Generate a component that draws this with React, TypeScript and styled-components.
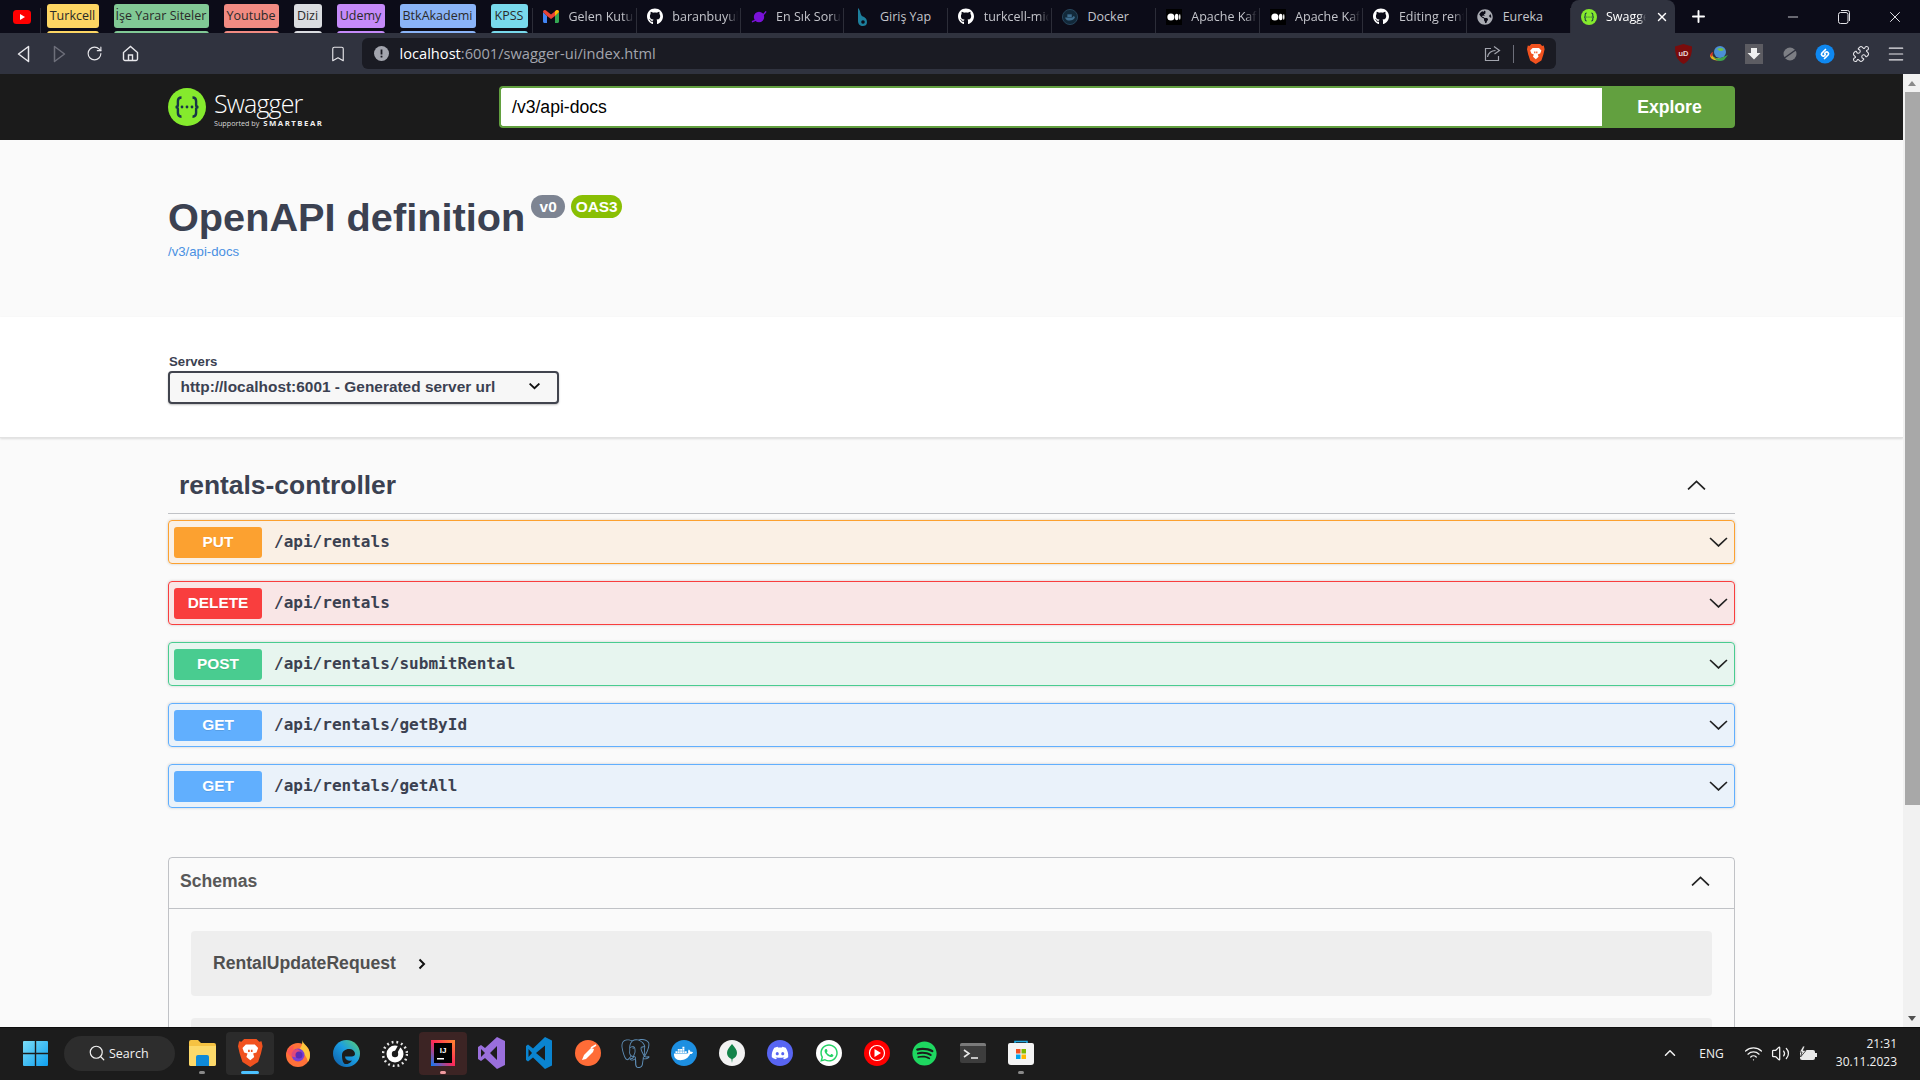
import React from "react";
import styled, { createGlobalStyle } from "styled-components";
import { Search, Wifi, Volume2, ChevronUp, Minus, X, Plus, RotateCw, Bookmark, Puzzle, Menu } from "lucide-react";
import { FaGithub, FaDocker, FaDiscord, FaWhatsapp, FaSpotify, FaGlobeAmericas } from "react-icons/fa";
import { SiPostgresql } from "react-icons/si";

const Global = createGlobalStyle`
  html, body { margin: 0; height: 100%; overflow: hidden; }
  body { font-family: "Liberation Sans", Arial, sans-serif; background: #fafafa; }
  * { box-sizing: border-box; }
`;

const Shell = styled.div`
  display: flex;
  flex-direction: column;
  height: 100vh;
  overflow: hidden;
`;

/* ---------- browser tab strip ---------- */
const TabBar = styled.div`
  display: flex;
  height: 33px;
  flex: none;
  background: #0c0c18;
  overflow: hidden;
  font-family: "Open Sans", sans-serif;
  font-size: 12.5px;
`;
const PinnedTab = styled.div`
  width: 41px;
  height: 33px;
  padding-left: 3px;
  display: flex;
  align-items: center;
  justify-content: center;
  flex: none;
  position: relative;
  &::after {
    content: "";
    position: absolute;
    right: 0;
    top: 8px;
    bottom: 0;
    width: 1px;
    background: #2c2d38;
  }
`;
const ChipRow = styled.div`
  display: flex;
  gap: 15px;
  width: 492px;
  padding: 4px 0 0 5.5px;
  flex: none;
  position: relative;
  &::after {
    content: "";
    position: absolute;
    right: 0;
    top: 8px;
    bottom: 0;
    width: 1px;
    background: #2c2d38;
  }
`;
const Chip = styled.div<{ $bg: string; $w: number }>`
  width: ${(p) => p.$w}px;
  height: 24px;
  flex: none;
  border-radius: 3px;
  background: ${(p) => p.$bg};
  box-shadow: 0 27px 0 ${(p) => p.$bg};
  color: #2a2a2a;
  line-height: 24px;
  text-align: center;
  white-space: nowrap;
  overflow: hidden;
`;
const NamedTab = styled.div`
  width: 103.8px;
  height: 33px;
  flex: none;
  display: flex;
  align-items: center;
  gap: 9.5px;
  padding: 0 3px 0 10px;
  color: #c4c5cb;
  position: relative;
  &::after {
    content: "";
    position: absolute;
    right: 0;
    top: 8px;
    bottom: 0;
    width: 1px;
    background: #2c2d38;
  }
`;
const TabFavicon = styled.span`
  width: 16px;
  height: 16px;
  flex: none;
  display: flex;
  align-items: center;
  justify-content: center;
`;
const TabTitle = styled.span`
  white-space: nowrap;
  overflow: hidden;
  flex: 1;
  -webkit-mask-image: linear-gradient(90deg, #000 82%, transparent 100%);
  mask-image: linear-gradient(90deg, #000 82%, transparent 100%);
`;
const PlainTitle = styled.span`
  white-space: nowrap;
`;
const ActiveTab = styled.div`
  width: 104px;
  height: 33px;
  flex: none;
  display: flex;
  align-items: center;
  gap: 9px;
  padding: 0 6px 0 10px;
  background: #30333f;
  border-radius: 8px 8px 0 0;
  color: #fff;
`;
const NewTab = styled.div`
  width: 48px;
  display: flex;
  align-items: center;
  justify-content: center;
  flex: none;
  color: #fff;
`;
const WindowControls = styled.div`
  margin-left: auto;
  display: flex;
  color: #e4e4e8;
`;
const WindowButton = styled.div`
  width: 51px;
  height: 33px;
  display: flex;
  align-items: center;
  justify-content: center;
`;

/* ---------- browser toolbar ---------- */
const Toolbar = styled.div`
  height: 41px;
  flex: none;
  display: flex;
  align-items: center;
  background: #30333f;
  padding-left: 6px;
  color: #e8e8ec;
`;
const ToolButton = styled.div<{ $dim?: boolean }>`
  width: 35.5px;
  height: 31px;
  flex: none;
  display: flex;
  align-items: center;
  justify-content: center;
  color: ${(p) => (p.$dim ? "#6d6f7a" : "#e8e8ec")};
`;
const BookmarkSlot = styled(ToolButton)`
  margin-left: 172px;
`;
const UrlBar = styled.div`
  width: 1194px;
  height: 31px;
  flex: none;
  margin-left: 6px;
  background: #1a1b23;
  border-radius: 6px;
  display: flex;
  align-items: center;
  padding: 0 11px 0 12px;
  font-family: "Open Sans", sans-serif;
  font-size: 14.65px;
`;
const UrlHost = styled.span`
  color: #fff;
  margin: 0 0 2px 11px;
`;
const UrlRest = styled.span`
  color: #a3a5ae;
  margin-bottom: 2px;
`;
const UrlActions = styled.div`
  margin-left: auto;
  display: flex;
  align-items: center;
  gap: 12.5px;
  color: #a3a5ae;
`;
const UrlDivider = styled.span`
  width: 1px;
  height: 18px;
  background: #6d6f7a;
`;
const Extensions = styled.div`
  margin-left: 110px;
  display: flex;
`;

/* ---------- page ---------- */
const Viewport = styled.div`
  flex: 1;
  min-height: 0;
  display: flex;
`;
const Page = styled.main`
  flex: 1;
  min-width: 0;
  overflow: hidden;
  background: #fafafa;
  color: #3b4151;
`;
const Scrollbar = styled.div`
  width: 17px;
  flex: none;
  background: #f1f1f1;
  display: flex;
  flex-direction: column;
  align-items: center;
`;
const ArrowCell = styled.div`
  height: 18px;
  flex: none;
  display: flex;
  align-items: center;
  justify-content: center;
`;
const ArrowUp = styled.span`
  border: 4.5px solid transparent;
  border-top: 0;
  border-bottom: 5px solid #8a8a8a;
`;
const ArrowDown = styled.span`
  border: 4.5px solid transparent;
  border-bottom: 0;
  border-top: 5px solid #505050;
`;
const Thumb = styled.div`
  width: 15px;
  margin-left: 2px;
  height: 713px;
  background: #a8a8a8;
`;
const Filler = styled.div`
  flex: 1;
`;
const Wrap = styled.div`
  width: 1567px;
  margin: 0 auto;
`;
const SwaggerBar = styled.header`
  height: 66px;
  background: #1b1b1b;
`;
const SwaggerInner = styled(Wrap)`
  height: 66px;
  display: flex;
  align-items: center;
`;
const Brand = styled.div`
  width: 331px;
  flex: none;
  display: flex;
  align-items: center;
  gap: 8px;
  color: #fff;
`;
const BrandText = styled.div`
  display: flex;
  flex-direction: column;
  margin-top: 3px;
`;
const BrandName = styled.span`
  font-family: "Open Sans", sans-serif;
  font-weight: 300;
  font-size: 25px;
  line-height: 30px;
  letter-spacing: -0.85px;
`;
const BrandSub = styled.span`
  font-family: "Open Sans", sans-serif;
  font-size: 7.2px;
  line-height: 11px;
  color: #d8d8d8;
  white-space: nowrap;
`;
const BrandBear = styled.b`
  font-size: 7.8px;
  letter-spacing: 1.5px;
  margin-left: 2px;
  color: #f0f0f0;
`;
const SpecInput = styled.div`
  flex: 1;
  height: 42px;
  background: #fff;
  border: 2px solid #62a03f;
  border-right: 0;
  border-radius: 4px 0 0 4px;
  padding-left: 11px;
  font-size: 17.6px;
  line-height: 38px;
  color: #000;
`;
const ExploreButton = styled.div`
  width: 133px;
  height: 42px;
  flex: none;
  background: #62a03f;
  border-radius: 0 4px 4px 0;
  padding-left: 2px;
  color: #fff;
  font-weight: 700;
  font-size: 17.6px;
  line-height: 42px;
  text-align: center;
`;
const InfoSection = styled.section`
  height: 177px;
  padding-top: 55px;
`;
const TitleRow = styled.div`
  display: flex;
  align-items: flex-start;
  gap: 6px;
`;
const Title = styled.h1`
  margin: 0;
  font-size: 39.7px;
  line-height: 44px;
  font-weight: 700;
`;
const Badge = styled.span<{ $bg: string; $w: number }>`
  width: ${(p) => p.$w}px;
  height: 23px;
  border-radius: 12px;
  background: ${(p) => p.$bg};
  color: #fff;
  font-size: 15.4px;
  font-weight: 700;
  line-height: 23px;
  text-align: center;
`;
const SpecLink = styled.div`
  margin-top: 5px;
  font-size: 13.2px;
  line-height: 16px;
  color: #4990e2;
`;
const ServersSection = styled.section`
  height: 121px;
  padding-top: 38px;
  background: #fff;
  border-bottom: 1px solid #e2e2e2;
  box-shadow: 0 1px 2px rgba(0, 0, 0, 0.12);
`;
const ServersLabel = styled.div`
  font-size: 13.2px;
  font-weight: 700;
  line-height: 14px;
  margin-bottom: 2px;
  padding-left: 1px;
`;
const ServerSelect = styled.div`
  width: 391px;
  height: 33px;
  border: 2px solid #41444e;
  border-radius: 4px;
  background: #f7f7f7;
  box-shadow: 0 1px 2px rgba(0, 0, 0, 0.25);
  display: flex;
  align-items: center;
  justify-content: space-between;
  padding: 0 17px 2px 10.5px;
  font-size: 15.4px;
  font-weight: 700;
  letter-spacing: 0.02px;
`;
const TagHeader = styled.div`
  height: 76px;
  padding: 19px 29px 0 11px;
  border-bottom: 1px solid rgba(59, 65, 81, 0.3);
  margin-bottom: 6px;
  display: flex;
  align-items: center;
  justify-content: space-between;
`;
const TagTitle = styled.h3`
  margin: 0;
  font-size: 26.4px;
  font-weight: 700;
  line-height: 32px;
`;
const Operation = styled.div<{ $c: string }>`
  height: 44px;
  margin-bottom: 17px;
  display: flex;
  align-items: center;
  padding: 0 6px 0 5px;
  border: 1px solid ${(p) => p.$c};
  border-radius: 4px;
  background: ${(p) => p.$c}1a;
  box-shadow: 0 0 3px rgba(0, 0, 0, 0.19);
`;
const Method = styled.span<{ $c: string }>`
  width: 88px;
  height: 31px;
  flex: none;
  border-radius: 3px;
  background: ${(p) => p.$c};
  color: #fff;
  font-size: 15.4px;
  font-weight: 700;
  line-height: 29px;
  text-align: center;
  text-shadow: 0 1px 0 rgba(0, 0, 0, 0.1);
`;
const OpPath = styled.span`
  margin-left: 12px;
  font-family: "DejaVu Sans Mono", "Liberation Mono", monospace;
  font-size: 16.05px;
  font-weight: 700;
  line-height: 18px;
  flex: 1;
`;
const SchemasBox = styled.section`
  margin-top: 49px;
  border: 1px solid rgba(59, 65, 81, 0.3);
  border-radius: 4px;
`;
const SchemasHeader = styled.div`
  height: 51px;
  border-bottom: 1px solid rgba(59, 65, 81, 0.3);
  padding: 0 24px 4px 11px;
  display: flex;
  align-items: center;
  justify-content: space-between;
  font-size: 17.6px;
  font-weight: 700;
  color: #585858;
`;
const SchemasBody = styled.div`
  padding: 22px 22px 0;
`;
const ModelRow = styled.div`
  height: 65px;
  margin-bottom: 22px;
  background: #eee;
  border-radius: 4px;
  padding: 0 22px;
  display: flex;
  align-items: center;
  gap: 22px;
  font-size: 17.6px;
  font-weight: 700;
  color: #505050;
`;

/* ---------- windows taskbar ---------- */
const Taskbar = styled.footer`
  height: 53px;
  flex: none;
  padding-bottom: 2px;
  background: #1c1c1c;
  border-top: 1px solid #0e0e0e;
  display: flex;
  align-items: center;
  color: #f2f2f2;
  font-family: "Open Sans", sans-serif;
`;
const StartButton = styled.div`
  width: 64px;
  display: flex;
  justify-content: center;
  padding-left: 7px;
`;
const SearchPill = styled.div`
  width: 111px;
  height: 35px;
  flex: none;
  border-radius: 18px;
  background: #2d2d2d;
  display: flex;
  align-items: center;
  gap: 3px;
  padding-left: 24px;
  font-size: 12.5px;
  margin-right: 3px;
`;
const AppButton = styled.div<{ $tint?: string; $mark?: string; $markW?: number }>`
  width: 48.2px;
  height: 43px;
  flex: none;
  display: flex;
  align-items: center;
  justify-content: center;
  border-radius: 4px;
  position: relative;
  background: ${(p) => p.$tint ?? "transparent"};
  &::after {
    content: "";
    display: ${(p) => (p.$mark ? "block" : "none")};
    position: absolute;
    bottom: 1px;
    left: 50%;
    transform: translateX(-50%);
    width: ${(p) => p.$markW ?? 6}px;
    height: 3px;
    border-radius: 2px;
    background: ${(p) => p.$mark};
  }
`;
const Tray = styled.div`
  margin-left: auto;
  display: flex;
  align-items: center;
  padding-right: 23px;
`;
const TrayLang = styled.span`
  font-size: 12px;
  margin: 0 20px 0 20px;
`;
const TrayIcons = styled.div`
  display: flex;
  gap: 8px;
  align-items: center;
  margin-right: 18px;
`;
const Clock = styled.div`
  font-size: 12px;
  line-height: 18px;
  text-align: right;
`;

/* ---------- drawn marks ---------- */
const Chevron = ({ up, w = 19, c = "#222", sw = 1.7 }: { up?: boolean; w?: number; c?: string; sw?: number }) => (
  <svg width={w} height={w * 0.55} viewBox="0 0 19 10.5" fill="none">
    <path d={up ? "M1 9.5 9.5 1.5 18 9.5" : "M1 1 9.5 9 18 1"} stroke={c} strokeWidth={sw} />
  </svg>
);
const SwaggerMark = ({ s }: { s: number }) => (
  <svg width={s} height={s} viewBox="0 0 38 38">
    <circle cx="19" cy="19" r="19" fill="#85ea2d" />
    <path d="M13.5 9.5c-3 0-3.6 1.6-3.6 3.6v4c0 1.4-.9 2-2.4 2 1.500 0 2.400.6 2.400 2v4c0 2 .6 3.600 3.600 3.600M24.500 9.500c3 0 3.600 1.600 3.600 3.600v4c0 1.400.9 2 2.400 2-1.500 0-2.400.6-2.400 2v4c0 2-.6 3.600-3.600 3.600" fill="none" stroke="#173647" strokeWidth="2.400" />
    <circle cx="14" cy="19" r="1.400" fill="#173647" />
    <circle cx="19" cy="19" r="1.400" fill="#173647" />
    <circle cx="24" cy="19" r="1.400" fill="#173647" />
  </svg>
);
const YouTubeFav = () => (
  <svg width="18" height="14" viewBox="0 0 18 14">
    <rect width="18" height="14" rx="3.500" fill="#f00" />
    <path d="M7 4v6l5-3z" fill="#fff" />
  </svg>
);
const GmailFav = () => (
  <svg width="16" height="13" viewBox="0 0 16 13">
    <path d="M0 2v9.500C0 12.300.7 13 1.500 13H4V6z" fill="#4285f4" />
    <path d="M16 2v9.500c0 .8-.7 1.500-1.500 1.500H12V6z" fill="#34a853" />
    <path d="M0 2c0-1.800 2-2.600 3-1.500L8 4.500 13 .5c1-1 3-.3 3 1.500L12 6 8 9 4 6z" fill="#ea4335" />
    <path d="M12 6l4-4c0-1.800-2-2.600-3-1.500L12 1.300z" fill="#fbbc04" />
  </svg>
);
const PlanetFav = () => (
  <svg width="17" height="16" viewBox="0 0 17 16">
    <circle cx="8.500" cy="8" r="5.500" fill="#7a12d8" />
    <path d="M1 13C5 12 13 7 16 2" stroke="#7a12d8" strokeWidth="1.500" fill="none" />
  </svg>
);
const LoginFav = () => (
  <svg width="14" height="18" viewBox="0 0 14 18">
    <path d="M3 0c3 3 2 6 4 8 2 1 5 2 5 6 0 3-2 4-4 4-3 0-5-2-5-5z" fill="#1d7f9c" />
    <circle cx="8" cy="14" r="1.800" fill="#0c0c18" />
  </svg>
);
const DockerFav = () => (
  <svg width="18" height="18" viewBox="0 0 18 18">
    <circle cx="9" cy="9" r="8.500" fill="#12293a" stroke="#2a4a62" />
    <path d="M3.500 9.500h8c.8 0 1.200-1 1.200-1.500l2 1c-1 3-3.500 4-6 4-3 0-5-1.500-5.200-3.500z" fill="#3e6d8e" />
    <path d="M6 6h5v3H6z" fill="#3e6d8e" />
  </svg>
);
const MediumFav = () => (
  <svg width="18" height="18" viewBox="0 0 18 18">
    <rect width="18" height="18" fill="#000" />
    <ellipse cx="5.500" cy="9" rx="4" ry="4" fill="#fff" />
    <ellipse cx="12" cy="9" rx="2" ry="3.700" fill="#fff" />
    <ellipse cx="15.500" cy="9" rx=".8" ry="3.300" fill="#fff" />
  </svg>
);
const BackIcon = ({ flip }: { flip?: boolean }) => (
  <svg width="13" height="18" viewBox="0 0 13 18" fill="none">
    <path d={flip ? "M1.500 1.500 11.500 9 1.500 16.500z" : "M11.500 1.500 1.500 9l10 7.500z"} stroke="currentColor" strokeWidth="1.500" strokeLinejoin="round" />
  </svg>
);
const HomeIcon = () => (
  <svg width="17" height="17" viewBox="0 0 17 17" fill="none" stroke="currentColor" strokeWidth="1.400">
    <path d="M1.500 7.500 8.500 1.500l7 6V14a1.500 1.500 0 0 1-1.500 1.500H3A1.500 1.500 0 0 1 1.500 14z" />
    <path d="M6.500 15.500V10h4v5.500" />
  </svg>
);
const ShareIcon = () => (
  <svg width="17" height="17" viewBox="0 0 17 17" fill="none" stroke="currentColor" strokeWidth="1.200">
    <path d="M7 3.500H1.500v12h13V11" />
    <path d="M3.500 12c.5-4 4-6.500 8-6.500M10 1.500l5.500 4-5 3.500" />
  </svg>
);
const InfoDot = () => (
  <svg width="15" height="15" viewBox="0 0 15 15">
    <circle cx="7.500" cy="7.500" r="7.500" fill="#a3a5ae" />
    <path d="M6.600 3.500h1.800v5H6.600zM6.600 9.800h1.800v1.800H6.600z" fill="#1a1b23" />
  </svg>
);
const BraveLion = ({ s }: { s: number }) => (
  <svg width={s * 0.88} height={s} viewBox="0 0 22 25">
    <path d="M5.500 0h11l2.500 2.500L21 2l1 4.500L20.500 13 18 20.500 11 25l-7-4.500L1.500 13 0 6.500 1 2l2 .5z" fill="#f1521f" />
    <path d="M7 5h8l3 3-1.500 4-3 1 1 3-3.500 3-3.500-3 1-3-3-1L4 8z" fill="#fff" />
    <path d="M9 9.500h1.500v2H9zM11.500 9.500H13v2h-1.500z" fill="#f1521f" />
  </svg>
);
const UblockIcon = () => (
  <svg width="17" height="20" viewBox="0 0 17 20">
    <path d="M8.500 0 17 2.500c0 8-1.500 13.500-8.500 17.500C1.500 16 0 10.500 0 2.500z" fill="#7a0c0c" />
    <text x="8.500" y="12" fontSize="7.500" fontWeight="700" textAnchor="middle" fill="#e6d6d6" fontFamily="Liberation Sans">uD</text>
  </svg>
);
const IdmIcon = () => (
  <svg width="20" height="18" viewBox="0 0 20 18">
    <circle cx="11" cy="7" r="6" fill="#4b8fd6" />
    <path d="M8 4c3-2 6-1 7 1-3 2-5 1-7-1z" fill="#6fbf4a" />
    <path d="M1 10c0 5 7 7 12 4l-3-1c-3 1-6 0-7-4z" fill="#e8b21c" />
    <path d="M4 11c2 3 7 3 10 1l5-2-4 5c-4 2-9 1-11-4z" fill="#3fa34d" />
    <path d="M1 10c1-2 2-3 3-3L3 12z" fill="#d8352a" />
  </svg>
);
const DownloadSquare = () => (
  <svg width="18" height="20" viewBox="0 0 18 20">
    <rect width="18" height="20" fill="#5c5c62" />
    <path d="M6 4h6v5h3.500L9 15.500 2.500 9H6z" fill="#f0f0f0" />
  </svg>
);
const GreyPlanet = () => (
  <svg width="16" height="16" viewBox="0 0 16 16">
    <circle cx="8" cy="8" r="6.500" fill="#7c7e84" />
    <path d="M1 13 15 3" stroke="#30333f" strokeWidth="1.500" />
  </svg>
);
const ShazamIcon = () => (
  <svg width="20" height="20" viewBox="0 0 20 20">
    <circle cx="10" cy="10" r="9.500" fill="#0f88f0" />
    <path d="M10.500 5.500 6.800 9.200a1.800 1.800 0 0 0 2.500 2.500l1-1M9.500 14.500l3.700-3.700a1.800 1.800 0 0 0-2.500-2.500l-1 1" fill="none" stroke="#fff" strokeWidth="1.700" strokeLinecap="round" />
  </svg>
);
const RestoreIcon = () => (
  <svg width="12" height="14" viewBox="0 0 12 14" fill="none" stroke="currentColor" strokeWidth="1">
    <rect x=".5" y="2.500" width="9.500" height="11" rx="2" />
    <path d="M3 .5h6.500a2 2 0 0 1 2 2V11" />
  </svg>
);
const WinLogo = () => (
  <svg width="25" height="25" viewBox="0 0 25 25">
    <defs>
      <linearGradient id="win" x1="0" y1="0" x2="1" y2="1">
        <stop offset="0" stopColor="#7adcf6" />
        <stop offset="1" stopColor="#0e9ff0" />
      </linearGradient>
    </defs>
    <path d="M0 1a1 1 0 0 1 1-1h10.800v11.800H0zM13.200 0H24a1 1 0 0 1 1 1v10.800H13.200zM0 13.200h11.800V25H1a1 1 0 0 1-1-1zM13.200 13.200H25V24a1 1 0 0 1-1 1H13.200z" fill="url(#win)" />
  </svg>
);
const FolderIcon = () => (
  <svg width="27" height="26" viewBox="0 0 27 26">
    <path d="M0 2a2 2 0 0 1 2-2h7l3 3h13a2 2 0 0 1 2 2v19a2 2 0 0 1-2 2H2a2 2 0 0 1-2-2z" fill="#f5c242" />
    <path d="M0 6h27v18a2 2 0 0 1-2 2H2a2 2 0 0 1-2-2z" fill="#fcd96a" />
    <path d="M7 17a2 2 0 0 1 2-2h9a2 2 0 0 1 2 2v9H7z" fill="#0f8ad8" />
  </svg>
);
const FirefoxIcon = () => (
  <svg width="26" height="27" viewBox="0 0 26 27">
    <circle cx="13" cy="15" r="12" fill="#ff7139" />
    <path d="M17 0c1 4 8 7 8 15 0 3-1 5-2 7-1-5-4-9-9-12 2-3 4-6 3-10z" fill="#ffc53d" />
    <circle cx="13" cy="15" r="6.500" fill="#7a3fd6" />
    <path d="M2 12c2-5 5-6 7-6-2 3 0 5 3 3 3 1 5 4 3 7-6 3-11 0-13-4z" fill="#ff4f5e" opacity=".75" />
    <circle cx="14" cy="15" r="3.500" fill="#5b2bb5" />
  </svg>
);
const EdgeIcon = () => (
  <svg width="27" height="27" viewBox="0 0 27 27">
    <defs>
      <linearGradient id="edge" x1="0" y1="1" x2="1" y2="0">
        <stop offset="0" stopColor="#0c59a4" />
        <stop offset=".55" stopColor="#1b9de2" />
        <stop offset="1" stopColor="#5fd36a" />
      </linearGradient>
    </defs>
    <circle cx="13.500" cy="13.500" r="13.500" fill="url(#edge)" />
    <path d="M9 15c0-4 4-6.500 8-6 3 .4 5 2.500 5 5 0 2-2 2.500-5 2.500H12c0 3 3 5 7 4-2 3-5 4-7 3.500-2.500-1-3-6-3-9z" fill="#1c1c1c" />
  </svg>
);
const GaugeIcon = () => (
  <svg width="26" height="27" viewBox="0 0 26 27">
    <circle cx="13" cy="14" r="12" fill="none" stroke="#e6e6e6" strokeWidth="2.500" strokeDasharray="1.800 3" />
    <circle cx="13" cy="14" r="8.500" fill="#fff" />
    <path d="M13 14 18 5" stroke="#1c1c1c" strokeWidth="3" />
    <circle cx="13" cy="14" r="3.200" fill="#1c1c1c" />
  </svg>
);
const IdeaIcon = () => (
  <svg width="24" height="26" viewBox="0 0 24 26">
    <defs>
      <linearGradient id="idea" x1="0" y1="1" x2="1" y2="0">
        <stop offset="0" stopColor="#087cfa" />
        <stop offset=".5" stopColor="#fe2857" />
        <stop offset="1" stopColor="#fe8a2e" />
      </linearGradient>
    </defs>
    <rect width="24" height="26" fill="url(#idea)" />
    <rect x="3" y="3" width="18" height="20" fill="#000" />
    <text x="12" y="13" fontSize="8" fontWeight="700" textAnchor="middle" fill="#fff" fontFamily="Liberation Sans">IJ</text>
    <rect x="6" y="18" width="7" height="1.500" fill="#fff" />
  </svg>
);
const VsIcon = () => (
  <svg width="27" height="32" viewBox="0 0 27 32">
    <path d="M19 0 27 4v24l-8 4L7 21l-4 3-3-2V10l3-2 4 3z" fill="#9a6fdc" />
    <path d="M19 9 12 16l7 7zM3 12v8l4-4z" fill="#1c1c1c" />
  </svg>
);
const VscodeIcon = () => (
  <svg width="26" height="32" viewBox="0 0 26 32">
    <path d="M19 0 26 3.500v25L19 32 7 20.500 2 24.500 0 23V9l2-1.500 5 4z" fill="#0a84d0" />
    <path d="M19 8.500 10 16l9 7.500zM2.500 12v8L6 16z" fill="#1c1c1c" />
  </svg>
);
const PostmanIcon = () => (
  <svg width="26" height="26" viewBox="0 0 26 26">
    <circle cx="13" cy="13" r="13" fill="#ff6c37" />
    <path d="M7 20l2-5 7-7 3 1-1 3-7 7z" fill="#fff" />
    <path d="M16 8l5-3" stroke="#fff" strokeWidth="1.500" />
  </svg>
);
const TileCircle = styled.span<{ $bg: string; $c?: string }>`
  width: 26px;
  height: 26px;
  border-radius: 50%;
  background: ${(p) => p.$bg};
  color: ${(p) => p.$c ?? "#fff"};
  display: flex;
  align-items: center;
  justify-content: center;
`;
const MongoLeaf = () => (
  <svg width="10" height="19" viewBox="0 0 10 19">
    <path d="M5 0c3 3.500 5 6 5 9 0 3-2 5-4.400 6L5 19l-.6-4C2 14 0 12 0 9c0-3 2-5.500 5-9z" fill="#13834a" />
  </svg>
);
const YtMusicIcon = () => (
  <svg width="26" height="26" viewBox="0 0 26 26">
    <circle cx="13" cy="13" r="13" fill="#f00" />
    <circle cx="13" cy="13" r="7.500" fill="none" stroke="#fff" strokeWidth="1.200" />
    <path d="M10.500 9v8l6.500-4z" fill="#fff" />
  </svg>
);
const TerminalIcon = () => (
  <svg width="26" height="20" viewBox="0 0 26 20">
    <rect width="26" height="20" rx="2" fill="#3d3d3d" />
    <path d="M0 2a2 2 0 0 1 2-2h22a2 2 0 0 1 2 2v1H0z" fill="#7a7a7a" />
    <path d="M4 7l5 3.500L4 14" fill="none" stroke="#e8e8e8" strokeWidth="1.600" />
    <path d="M11 15h7" stroke="#e8e8e8" strokeWidth="1.600" />
  </svg>
);
const StoreIcon = () => (
  <svg width="26" height="26" viewBox="0 0 26 26">
    <path d="M7 4V1.500h12V4" fill="none" stroke="#1fa8e0" strokeWidth="1.600" />
    <path d="M0 5a2 2 0 0 1 2-2h22a2 2 0 0 1 2 2v17a3 3 0 0 1-3 3H3a3 3 0 0 1-3-3z" fill="#f4f4f4" />
    <rect x="8" y="9" width="4.500" height="4.500" fill="#f25022" />
    <rect x="13.500" y="9" width="4.500" height="4.500" fill="#7fba00" />
    <rect x="8" y="14.500" width="4.500" height="4.500" fill="#00a4ef" />
    <rect x="13.500" y="14.500" width="4.500" height="4.500" fill="#ffb900" />
  </svg>
);
const BatteryIcon = () => (
  <svg width="20" height="15" viewBox="0 0 20 15">
    <rect x="2" y="4" width="15" height="10" rx="2" fill="#e8e8e8" />
    <rect x="17" y="7" width="2" height="4" fill="#e8e8e8" />
    <path d="M5 0 1.500 6H4L2.500 11 8 4.500H5.300L7 0z" fill="#e8e8e8" stroke="#1c1c1c" strokeWidth=".8" />
  </svg>
);

/* ---------- data ---------- */
const chips = [
  { t: "Turkcell", bg: "#fdd663", w: 52 },
  { t: "İşe Yarar Siteler", bg: "#81c995", w: 95 },
  { t: "Youtube", bg: "#f28b82", w: 55 },
  { t: "Dizi", bg: "#dadce0", w: 28 },
  { t: "Udemy", bg: "#c58af9", w: 48 },
  { t: "BtkAkademi", bg: "#8ab4f8", w: 76 },
  { t: "KPSS", bg: "#78d9ec", w: 37 },
];
const github = <FaGithub size={17} color="#fff" />;
const tabs = [
  { t: "Gelen Kutusu", i: <GmailFav /> },
  { t: "baranbuyuk", i: github },
  { t: "En Sık Sorular", i: <PlanetFav /> },
  { t: "Giriş Yap", i: <LoginFav />, plain: true },
  { t: "turkcell-micro", i: github },
  { t: "Docker", i: <DockerFav />, plain: true },
  { t: "Apache Kafka", i: <MediumFav /> },
  { t: "Apache Kafka", i: <MediumFav /> },
  { t: "Editing rental", i: github },
  { t: "Eureka", i: <FaGlobeAmericas size={16} color="#a9abb2" />, plain: true },
];
const ops = [
  { m: "PUT", p: "/api/rentals", c: "#fca130" },
  { m: "DELETE", p: "/api/rentals", c: "#f93e3e" },
  { m: "POST", p: "/api/rentals/submitRental", c: "#49cc90" },
  { m: "GET", p: "/api/rentals/getById", c: "#61affe" },
  { m: "GET", p: "/api/rentals/getAll", c: "#61affe" },
];

export default function App() {
  return (
    <Shell>
      <Global />
      <TabBar>
        <PinnedTab>
          <YouTubeFav />
        </PinnedTab>
        <ChipRow>
          {chips.map((c) => (
            <Chip key={c.t} $bg={c.bg} $w={c.w}>
              {c.t}
            </Chip>
          ))}
        </ChipRow>
        {tabs.map((t, i) => (
          <NamedTab key={i}>
            <TabFavicon>{t.i}</TabFavicon>
            {t.plain ? <PlainTitle>{t.t}</PlainTitle> : <TabTitle>{t.t}</TabTitle>}
          </NamedTab>
        ))}
        <ActiveTab>
          <TabFavicon>
            <SwaggerMark s={16} />
          </TabFavicon>
          <TabTitle>Swagger</TabTitle>
          <X size={14} strokeWidth={2.4} />
        </ActiveTab>
        <NewTab>
          <Plus size={19} strokeWidth={2.4} />
        </NewTab>
        <WindowControls>
          <WindowButton>
            <Minus size={16} strokeWidth={1.3} />
          </WindowButton>
          <WindowButton>
            <RestoreIcon />
          </WindowButton>
          <WindowButton>
            <X size={18} strokeWidth={1.3} />
          </WindowButton>
        </WindowControls>
      </TabBar>

      <Toolbar>
        <ToolButton>
          <BackIcon />
        </ToolButton>
        <ToolButton $dim>
          <BackIcon flip />
        </ToolButton>
        <ToolButton>
          <RotateCw size={17} strokeWidth={1.6} />
        </ToolButton>
        <ToolButton>
          <HomeIcon />
        </ToolButton>
        <BookmarkSlot>
          <Bookmark size={18} strokeWidth={1.5} />
        </BookmarkSlot>
        <UrlBar>
          <InfoDot />
          <UrlHost>localhost</UrlHost>
          <UrlRest>:6001/swagger-ui/index.html</UrlRest>
          <UrlActions>
            <ShareIcon />
            <UrlDivider />
            <BraveLion s={20} />
          </UrlActions>
        </UrlBar>
        <Extensions>
          <ToolButton>
            <UblockIcon />
          </ToolButton>
          <ToolButton>
            <IdmIcon />
          </ToolButton>
          <ToolButton>
            <DownloadSquare />
          </ToolButton>
          <ToolButton>
            <GreyPlanet />
          </ToolButton>
          <ToolButton>
            <ShazamIcon />
          </ToolButton>
          <ToolButton>
            <Puzzle size={18} strokeWidth={1.4} />
          </ToolButton>
          <ToolButton>
            <Menu size={20} strokeWidth={1.4} />
          </ToolButton>
        </Extensions>
      </Toolbar>

      <Viewport>
        <Page>
          <SwaggerBar>
            <SwaggerInner>
              <Brand>
                <SwaggerMark s={38} />
                <BrandText>
                  <BrandName>Swagger</BrandName>
                  <BrandSub>
                    Supported by <BrandBear>SMARTBEAR</BrandBear>
                  </BrandSub>
                </BrandText>
              </Brand>
              <SpecInput>/v3/api-docs</SpecInput>
              <ExploreButton>Explore</ExploreButton>
            </SwaggerInner>
          </SwaggerBar>
          <InfoSection>
            <Wrap>
              <TitleRow>
                <Title>OpenAPI definition</Title>
                <Badge $bg="#7d8492" $w={34}>v0</Badge>
                <Badge $bg="#89bf04" $w={51}>OAS3</Badge>
              </TitleRow>
              <SpecLink>/v3/api-docs</SpecLink>
            </Wrap>
          </InfoSection>
          <ServersSection>
            <Wrap>
              <ServersLabel>Servers</ServersLabel>
              <ServerSelect>
                http://localhost:6001 - Generated server url
                <Chevron w={11} c="#111" sw={3.2} />
              </ServerSelect>
            </Wrap>
          </ServersSection>
          <Wrap>
            <TagHeader>
              <TagTitle>rentals-controller</TagTitle>
              <Chevron up />
            </TagHeader>
            {ops.map((o, i) => (
              <Operation key={i} $c={o.c}>
                <Method $c={o.c}>{o.m}</Method>
                <OpPath>{o.p}</OpPath>
                <Chevron />
              </Operation>
            ))}
            <SchemasBox>
              <SchemasHeader>
                Schemas
                <Chevron up />
              </SchemasHeader>
              <SchemasBody>
                <ModelRow>
                  RentalUpdateRequest
                  <svg width="8" height="12" viewBox="0 0 8 12" fill="none">
                    <path d="M1.500 1.500 6 6l-4.500 4.500" stroke="#111" strokeWidth="2" />
                  </svg>
                </ModelRow>
                <ModelRow />
              </SchemasBody>
            </SchemasBox>
          </Wrap>
        </Page>
        <Scrollbar>
          <ArrowCell>
            <ArrowUp />
          </ArrowCell>
          <Thumb />
          <Filler />
          <ArrowCell>
            <ArrowDown />
          </ArrowCell>
        </Scrollbar>
      </Viewport>

      <Taskbar>
        <StartButton>
          <WinLogo />
        </StartButton>
        <SearchPill>
          <Search size={18} strokeWidth={1.6} />
          Search
        </SearchPill>
        <AppButton $mark="#8a8a8a">
          <FolderIcon />
        </AppButton>
        <AppButton $tint="#2b2b2b" $mark="#4cc2ff" $markW={18}>
          <BraveLion s={28} />
        </AppButton>
        <AppButton>
          <FirefoxIcon />
        </AppButton>
        <AppButton>
          <EdgeIcon />
        </AppButton>
        <AppButton>
          <GaugeIcon />
        </AppButton>
        <AppButton $tint="#3c2424" $mark="#ef9aa0">
          <IdeaIcon />
        </AppButton>
        <AppButton>
          <VsIcon />
        </AppButton>
        <AppButton>
          <VscodeIcon />
        </AppButton>
        <AppButton>
          <PostmanIcon />
        </AppButton>
        <AppButton>
          <SiPostgresql size={29} color="#5f8fb8" />
        </AppButton>
        <AppButton>
          <TileCircle $bg="#1d8fe1">
            <FaDocker size={19} />
          </TileCircle>
        </AppButton>
        <AppButton>
          <TileCircle $bg="#f2f2f2">
            <MongoLeaf />
          </TileCircle>
        </AppButton>
        <AppButton>
          <TileCircle $bg="#5865f2">
            <FaDiscord size={18} />
          </TileCircle>
        </AppButton>
        <AppButton>
          <TileCircle $bg="#fff" $c="#25d366">
            <FaWhatsapp size={20} />
          </TileCircle>
        </AppButton>
        <AppButton>
          <YtMusicIcon />
        </AppButton>
        <AppButton>
          <FaSpotify size={25} color="#1ed760" />
        </AppButton>
        <AppButton>
          <TerminalIcon />
        </AppButton>
        <AppButton $mark="#8a8a8a">
          <StoreIcon />
        </AppButton>
        <Tray>
          <ChevronUp size={18} />
          <TrayLang>ENG</TrayLang>
          <TrayIcons>
            <Wifi size={19} strokeWidth={1.6} />
            <Volume2 size={19} strokeWidth={1.6} />
            <BatteryIcon />
          </TrayIcons>
          <Clock>
            21:31
            <br />
            30.11.2023
          </Clock>
        </Tray>
      </Taskbar>
    </Shell>
  );
}
